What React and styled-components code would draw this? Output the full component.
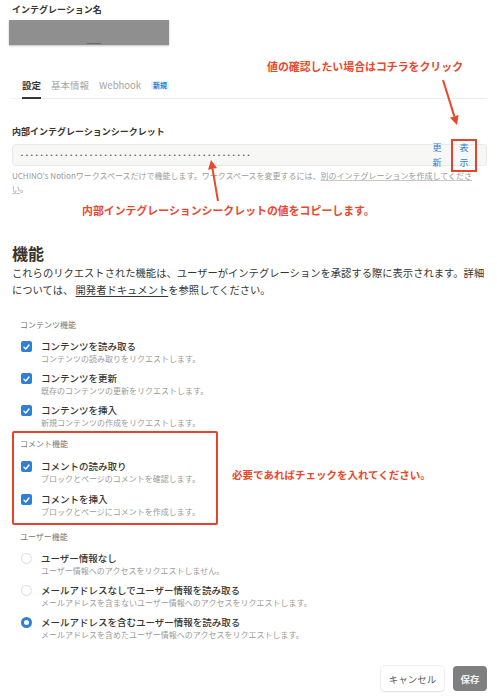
import React from 'react'
import styled, { createGlobalStyle } from 'styled-components'

const GlobalStyle = createGlobalStyle`
  body {
    margin: 0;
    background: #fff;
    font-family: "Noto Sans CJK JP", "Noto Sans", sans-serif;
    color: #37352f;
  }
`

const contentItems = [
  { title: 'コンテンツを読み取る', desc: 'コンテンツの読み取りをリクエストします。' },
  { title: 'コンテンツを更新', desc: '既存のコンテンツの更新をリクエストします。' },
  { title: 'コンテンツを挿入', desc: '新規コンテンツの作成をリクエストします。' },
]

const commentItems = [
  { title: 'コメントの読み取り', desc: 'ブロックとページのコメントを確認します。' },
  { title: 'コメントを挿入', desc: 'ブロックとページにコメントを作成します。' },
]

const userItems = [
  { title: 'ユーザー情報なし', desc: 'ユーザー情報へのアクセスをリクエストしません。' },
  { title: 'メールアドレスなしでユーザー情報を読み取る', desc: 'メールアドレスを含まないユーザー情報へのアクセスをリクエストします。' },
  { title: 'メールアドレスを含むユーザー情報を読み取る', desc: 'メールアドレスを含めたユーザー情報へのアクセスをリクエストします。', selected: true },
]

const CheckIcon = () => (
  <svg width="7" height="6" viewBox="0 0 7 6" fill="none">
    <path d="M1 3.2 L2.8 5 L6 1" stroke="#fff" strokeWidth="1.4" strokeLinecap="round" strokeLinejoin="round" />
  </svg>
)

const Arrow = ({ x1, y1, x2, y2 }) => {
  const ang = Math.atan2(y2 - y1, x2 - x1)
  const len = 9
  const w = 4.5
  const bx = x2 - Math.cos(ang) * len
  const by = y2 - Math.sin(ang) * len
  const px = -Math.sin(ang) * w
  const py = Math.cos(ang) * w
  return (
    <ArrowSvg width="497" height="700">
      <line x1={x1} y1={y1} x2={bx} y2={by} stroke="#e8482c" strokeWidth="2" />
      <polygon points={`${x2},${y2} ${bx + px},${by + py} ${bx - px},${by - py}`} fill="#e8482c" />
    </ArrowSvg>
  )
}

const OptionList = ({ items, kind }) =>
  items.map((it) => (
    <Option key={it.title}>
      {kind === 'radio' ? (
        <Radio $selected={it.selected} />
      ) : (
        <Checkbox><CheckIcon /></Checkbox>
      )}
      <div>
        <OptionTitle>{it.title}</OptionTitle>
        <OptionDesc>{it.desc}</OptionDesc>
      </div>
    </Option>
  ))

const App = () => {
  return (
    <Page>
      <GlobalStyle />
      <Title>インテグレーション名</Title>
      <Redacted />

      <Tabs>
        <Tab $active>設定</Tab>
        <Tab>基本情報</Tab>
        <Tab>Webhook</Tab>
        <Badge>新規</Badge>
      </Tabs>

      <Label>内部インテグレーションシークレット</Label>
      <SecretBox>
        <Dots>{'•'.repeat(47)}</Dots>
        <SecretButton>更新</SecretButton>
        <SecretButton $marked>表示</SecretButton>
      </SecretBox>
      <Helper>
        UCHINO's Notionワークスペースだけで機能します。ワークスペースを変更するには、<u>別のインテグレーションを作成してください</u>。
      </Helper>

      <Heading>機能</Heading>
      <Lead>
        これらのリクエストされた機能は、ユーザーがインテグレーションを承認する際に表示されます。詳細については、 <u>開発者ドキュメント</u>を参照してください。
      </Lead>

      <Section $top={21}>
        <SectionLabel>コンテンツ機能</SectionLabel>
        <OptionList items={contentItems} />
      </Section>

      <Section $boxed $top={2}>
        <SectionLabel>コメント機能</SectionLabel>
        <OptionList items={commentItems} />
      </Section>

      <Section $top={6}>
        <SectionLabel>ユーザー機能</SectionLabel>
        <OptionList items={userItems} kind="radio" />
      </Section>

      <Footer>
        <CancelButton>キャンセル</CancelButton>
        <SaveButton>保存</SaveButton>
      </Footer>

      {/* annotations */}
      <Note style={{ left: 267, top: 59 }}>値の確認したい場合はコチラをクリック</Note>
      <Arrow x1={443} y1={80} x2={457} y2={125} />
      <Note style={{ left: 82, top: 203 }}>内部インテグレーションシークレットの値をコピーします。</Note>
      <Arrow x1={218} y1={201} x2={211} y2={160} />
      <Note $small style={{ left: 232, top: 468 }}>必要であればチェックを入れてください。</Note>
    </Page>
  )
}

const Page = styled.div`
  position: relative;
  width: 497px;
  height: 700px;
  box-sizing: border-box;
  padding: 4px 10px 0 12px;
  overflow: hidden;
`

const Title = styled.div`
  font-size: 9px;
  line-height: 12px;
  font-weight: 700;
  color: #37352f;
`

const Redacted = styled.div`
  position: relative;
  width: 160px;
  height: 25px;
  margin: 4px 0 0 -3px;
  background: #8f8f8f;
  box-shadow: 0 1px 2px rgba(0, 0, 0, 0.25);
  &::after {
    content: '';
    position: absolute;
    left: 78px;
    bottom: 1px;
    width: 14px;
    height: 1px;
    background: #6a6a6a;
  }
`

const Tabs = styled.div`
  display: flex;
  align-items: flex-start;
  gap: 10px;
  margin-top: 33px;
  padding-left: 10px;
  border-bottom: 1px solid #ededec;
`

const Tab = styled.div`
  font-size: 9.5px;
  line-height: 14px;
  padding-bottom: 5px;
  margin-bottom: -1px;
  color: ${(p) => (p.$active ? '#37352f' : '#a5a4a1')};
  font-weight: ${(p) => (p.$active ? 600 : 400)};
  border-bottom: 2px solid ${(p) => (p.$active ? '#37352f' : 'transparent')};
`

const Badge = styled.span`
  margin-top: 3px;
  font-size: 7px;
  line-height: 9px;
  padding: 0 2px;
  border-radius: 2px;
  background: #e5f1fa;
  color: #2f80d0;
  font-weight: 600;
`

const Label = styled.div`
  margin-top: 27px;
  font-size: 9px;
  line-height: 12px;
  font-weight: 600;
`

const SecretBox = styled.div`
  display: flex;
  align-items: center;
  gap: 9px;
  height: 22px;
  margin-top: 6px;
  padding: 0 9px 0 8px;
  background: #f7f7f5;
  border: 1px solid #e9e9e7;
  border-radius: 4px;
  box-sizing: border-box;
`

const Dots = styled.div`
  flex: 1;
  font-family: "Liberation Sans", sans-serif;
  font-size: 5.5px;
  letter-spacing: 3px;
  color: #4a4a48;
  white-space: nowrap;
  overflow: hidden;
`

const SecretButton = styled.div`
  width: ${(p) => (p.$marked ? '26px' : '10px')};
  height: ${(p) => (p.$marked ? '33px' : 'auto')};
  box-sizing: border-box;
  display: flex;
  align-items: center;
  justify-content: center;
  font-size: 9px;
  line-height: 15px;
  color: #2e7fd0;
  text-align: center;
  border: ${(p) => (p.$marked ? '2px solid #e2452b' : 'none')};
  padding: 0 ${(p) => (p.$marked ? '6px' : '0')};
`

const Helper = styled.div`
  margin-top: 3px;
  font-size: 8px;
  line-height: 13px;
  color: #9b9a97;
  width: 470px;
  u {
    text-decoration-color: #c9c8c5;
  }
`

const Heading = styled.div`
  margin-top: 47px;
  font-size: 16px;
  line-height: 22px;
  font-weight: 700;
`

const Lead = styled.div`
  font-size: 10.3px;
  line-height: 17px;
  color: #37352f;
  width: 482px;
  u {
    text-underline-offset: 2px;
  }
`

const Section = styled.div`
  display: flex;
  flex-direction: column;
  gap: 7px;
  box-sizing: border-box;
  margin-top: ${(p) => p.$top}px;
  ${(p) =>
    p.$boxed
      ? `
    width: 206px;
    padding: 5px 6px 5px;
    border: 2px solid #e2452b;
    border-radius: 2px;
    gap: 8px;
  `
      : `
    padding-left: 8px;
  `}
`

const SectionLabel = styled.div`
  font-size: 8px;
  line-height: 12px;
  color: #787774;
  margin-bottom: 2px;
`

const Option = styled.div`
  display: flex;
  align-items: flex-start;
  gap: 9px;
`

const Checkbox = styled.div`
  flex: none;
  width: 11px;
  height: 11px;
  margin: 1px 0 0 1px;
  border-radius: 2px;
  background: #2e7fd6;
  display: flex;
  align-items: center;
  justify-content: center;
`

const Radio = styled.div`
  flex: none;
  width: 11px;
  height: 11px;
  margin: 1px 0 0 1px;
  border-radius: 50%;
  box-sizing: border-box;
  border: ${(p) => (p.$selected ? '3.5px solid #2e7fd6' : '1px solid #dcdcda')};
  background: #fff;
`

const OptionTitle = styled.div`
  font-size: 9.5px;
  line-height: 13px;
  font-weight: 500;
  color: #37352f;
`

const OptionDesc = styled.div`
  font-size: 8px;
  line-height: 12px;
  color: #9b9a97;
`

const Footer = styled.div`
  display: flex;
  justify-content: flex-end;
  gap: 9px;
  margin-top: 25px;
`

const CancelButton = styled.div`
  width: 63px;
  height: 25px;
  display: flex;
  align-items: center;
  justify-content: center;
  font-size: 9.5px;
  color: #5f5e5b;
  background: #fff;
  border-radius: 4px;
  box-shadow: 0 0 0 1px rgba(15, 15, 15, 0.05), 0 1px 2px rgba(15, 15, 15, 0.08);
`

const SaveButton = styled.div`
  width: 34px;
  height: 25px;
  display: flex;
  align-items: center;
  justify-content: center;
  font-size: 9.5px;
  font-weight: 600;
  color: #f2f2f2;
  background: #7f7f7f;
  border-radius: 4px;
`

const Note = styled.div`
  position: absolute;
  font-size: ${(p) => (p.$small ? '10.5px' : '10.9px')};
  line-height: 14px;
  font-weight: 700;
  color: #e8482c;
  white-space: nowrap;
`

const ArrowSvg = styled.svg`
  position: absolute;
  left: 0;
  top: 0;
  pointer-events: none;
`

export default App
